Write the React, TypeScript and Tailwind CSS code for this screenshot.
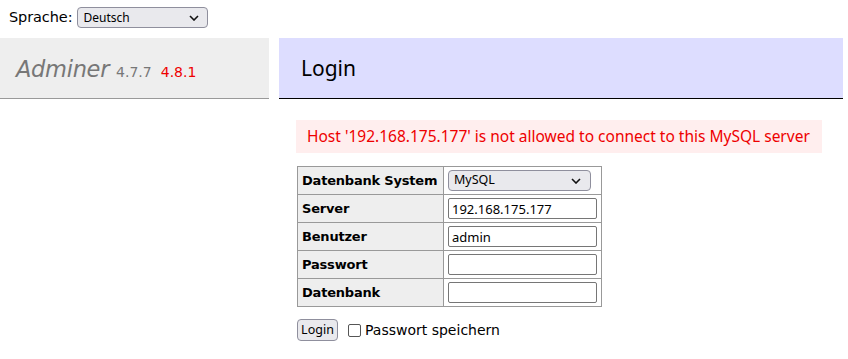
import { useState } from "react";

const rows = [
    { label: "Datenbank System", kind: "select", value: "MySQL" },
    { label: "Server", kind: "input", value: "192.168.175.177" },
    { label: "Benutzer", kind: "input", value: "admin" },
    { label: "Passwort", kind: "input", value: "" },
    { label: "Datenbank", kind: "input", value: "" },
];

function Chevron() {
    return (
        <svg width="10" height="6" viewBox="0 0 10 6" className="shrink-0">
            <path d="M1 1l4 4 4-4" fill="none" stroke="#111" strokeWidth="1.6" />
        </svg>
    );
}

export default function App() {
    const [remember, setRemember] = useState(false);

    return (
        <div className="w-[848px] h-[359px] bg-white text-black font-['DejaVu_Sans',Verdana,sans-serif] text-[14px] overflow-hidden">
            <div className="h-[38px] flex items-center pl-[9px] gap-[5px] pb-[3px]">
                <span className="text-[14.5px] tracking-[-0.1px]">Sprache:</span>
                <div className="w-[131px] h-[21px] flex items-center justify-between px-[5px] pr-[8px] rounded-[4px] border border-[#8f8f9d] bg-[#e9e9ed] text-[12px] font-['Noto_Sans',sans-serif]">
                    <span>Deutsch</span>
                    <Chevron />
                </div>
            </div>

            <div className="flex gap-[10px]">
                <div className="w-[269px] h-[61px] bg-[#eee] border-b border-[#999] flex items-center pl-[16px] pt-[3px]">
                    <span className="italic text-[#777] text-[22.5px] font-['DejaVu_Sans',sans-serif] tracking-[-0.3px]">Adminer</span>
                    <span className="ml-[7px] mt-[5px] text-[#777] text-[14px]">4.7.7</span>
                    <span className="ml-[9px] mt-[5px] text-[#e00] text-[14px]">4.8.1</span>
                </div>
                <div className="w-[564px] h-[61px] bg-[#ddf] border-b border-black flex items-center pl-[22px] pt-[2px]">
                    <span className="text-[21px] font-['Noto_Sans',sans-serif]">Login</span>
                </div>
            </div>

            <div className="pl-[296px]">
                <div className="mt-[21px] w-[526px] h-[33px] bg-[#fee] text-[#e00] flex items-center pl-[11px] text-[15.5px] font-['Noto_Sans',sans-serif]">
                    Host '192.168.175.177' is not allowed to connect to this MySQL server
                </div>

                <table className="mt-[13px] ml-[1px] border-collapse text-[13px] table-fixed w-[304px]">
                    <colgroup>
                        <col className="w-[146px]" />
                        <col className="w-[158px]" />
                    </colgroup>
                    <tbody>
                        {rows.map((r) => (
                            <tr key={r.label} className="h-[28px]">
                                <th className="border border-[#999] bg-[#eee] text-left font-bold px-[4px] py-0 whitespace-nowrap tracking-[-0.2px]">
                                    {r.label}
                                </th>
                                <td className="border border-[#999] px-[4px] py-0">
                                    {r.kind === "select" ? (
                                        <div className="w-[143px] h-[21px] flex items-center justify-between pl-[5px] pr-[9px] rounded-[4px] border border-[#8f8f9d] bg-[#e9e9ed] text-[12.5px] font-['Noto_Sans',sans-serif]">
                                            <span>{r.value}</span>
                                            <Chevron />
                                        </div>
                                    ) : (
                                        <input
                                            defaultValue={r.value}
                                            className="w-[149px] h-[21px] border border-[#767676] rounded-[2px] px-[3px] text-[13px] font-['Noto_Sans',sans-serif] outline-none bg-white"
                                        />
                                    )}
                                </td>
                            </tr>
                        ))}
                    </tbody>
                </table>

                <div className="mt-[12px] flex items-center ml-[1px]">
                    <button className="w-[41px] h-[22px] rounded-[4px] border border-[#8f8f9d] bg-[#e9e9ed] text-[12.5px] font-['Noto_Sans',sans-serif] leading-none">
                        Login
                    </button>
                    <label className="ml-[10px] flex items-center gap-[4px] text-[14px]">
                        <span
                            onClick={() => setRemember(!remember)}
                            className="w-[13px] h-[13px] border border-[#555] rounded-[2px] bg-white"
                        >
                            {remember ? "✓" : null}
                        </span>
                        <span>Passwort speichern</span>
                    </label>
                </div>
            </div>
        </div>
    );
}
